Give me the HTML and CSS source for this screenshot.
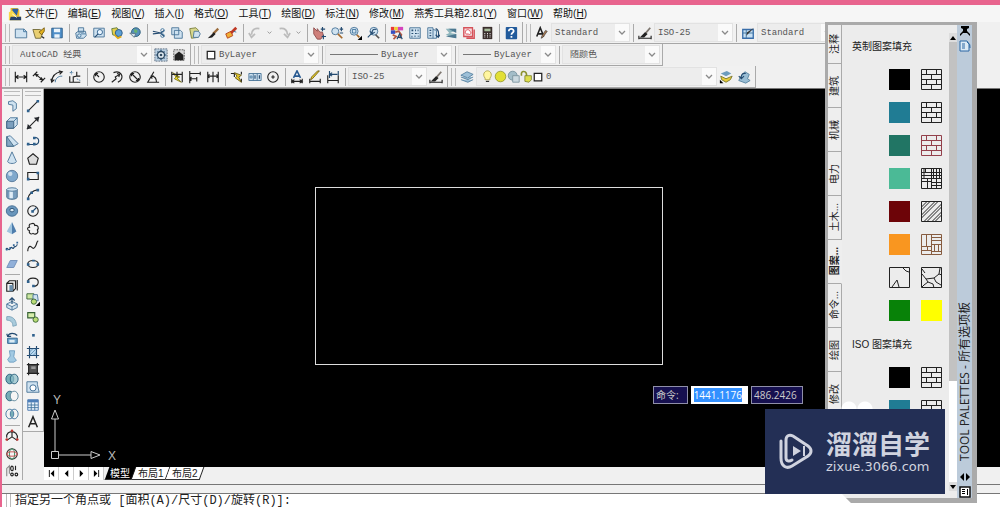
FILE: index.html
```html
<!DOCTYPE html>
<html lang="zh-CN">
<head>
<meta charset="utf-8">
<title>AutoCAD</title>
<link rel="stylesheet" href="styles.css">
</head>
<body>
<svg class="sprite" aria-hidden="true">
  <symbol id="chev" viewBox="0 0 8 8"><path class="g" d="M1 2.5l3 3 3-3"/></symbol>
  <symbol id="app" viewBox="0 0 16 16"><path d="M3 1h8l2 3v7H3z" fill="#e9b92d"/><path d="M5 2h7l-2 8H4z" fill="#2c62a5"/><path d="M1 6l4-2 5 6 5 1v4H1z" fill="#f7d64a"/><path d="M3 11h12v4H2z" fill="#263f68"/><path d="M5 8l5 4" stroke="#fff"/></symbol>
  <symbol id="new" viewBox="0 0 16 16"><path class="s" d="M1.5 3.5h10l3 3v7h-13z"/><path class="b" d="M11 3.5v3h3.5"/></symbol>
  <symbol id="open" viewBox="0 0 16 16"><path d="M1 4h8l4 2-3 8H4z" fill="#e9cf72" stroke="#6d6535"/><path d="M8 7l6-5v4l-3 4z" fill="#e3b21f" stroke="#775c14"/><path class="k" d="M11 12l3 2"/></symbol>
  <symbol id="save" viewBox="0 0 16 16"><path d="M2 2.5h12v11H2z" fill="#4f8fc9" stroke="#275987"/><path d="M4.500 3h7v4h-7zM5 9.500h6v4H5z" fill="#eaf4fb"/></symbol>
  <symbol id="print" viewBox="0 0 16 16"><path class="s" d="M5 2h6v5H5zM2 8l3-2h8l1 5-3 3H3z"/><circle class="b" cx="6" cy="11" r="2"/><path class="b" d="M8 9h5"/></symbol>
  <symbol id="preview" viewBox="0 0 16 16"><path class="s" d="M2 2.500h12v10H2z"/><circle cx="9" cy="7" r="3" fill="#e9f5ff" stroke="#2a5b89"/><path class="n" d="M7 9l-4 4"/></symbol>
  <symbol id="publish" viewBox="0 0 16 16"><path d="M2 3l6-1 3 4-2 6-6-2z" fill="#e6cf4a" stroke="#5c7838"/><circle cx="10" cy="8" r="4" fill="#5c9fd4" stroke="#27567f"/><path d="M5 10l4 4 4-2" fill="none" stroke="#dfa916" stroke-width="2"/></symbol>
  <symbol id="globe" viewBox="0 0 16 16"><circle cx="9" cy="7" r="5" fill="#568fba" stroke="#285b77"/><path d="M7 3l4 2-1 3-3-1z" fill="#69b26e"/><path d="M2 8l5 5 2-4z" fill="#d8e5ed" stroke="#587283"/></symbol>
  <symbol id="cut" viewBox="0 0 16 16"><path class="n" d="M1 6l9 2 4-3M1 9l9-1 4 4"/><circle class="b" cx="12" cy="5" r="2"/><circle class="b" cx="12" cy="11" r="2"/></symbol>
  <symbol id="copy" viewBox="0 0 16 16"><path class="s" d="M2 2h8v8H2zM5 5h7l2 2v7H5z"/></symbol>
  <symbol id="paste" viewBox="0 0 16 16"><path d="M2 3l7-1 3 3-1 8-7 1z" fill="#d7d78c" stroke="#777b38"/><path class="s" d="M7 6l5 0 2 3-2 4H6z"/></symbol>
  <symbol id="brush" viewBox="0 0 16 16"><path d="M14 3L8 9" stroke="#9a6a3a" stroke-width="2.500"/><path d="M9 7l2 2-4 4-5 1z" fill="#222"/></symbol>
  <symbol id="block" viewBox="0 0 16 16"><path d="M2 9l6-3 2 5-6 3z" fill="#f0ae35" stroke="#b53c16"/><path d="M14 2L8 8" stroke="#bf3723" stroke-width="3"/><path class="b" d="M11 6l3 1"/></symbol>
  <symbol id="undo" viewBox="0 0 16 16"><path d="M13 3C7 2 4 5 4 10M1 8l3 5 4-4" fill="none" stroke="#bbb" stroke-width="2"/></symbol>
  <symbol id="redo" viewBox="0 0 16 16"><path d="M3 3c6-1 9 2 9 7M15 8l-3 5-4-4" fill="none" stroke="#bbb" stroke-width="2"/></symbol>
  <symbol id="pan" viewBox="0 0 16 16"><path d="M2 2l4 4V3l3 4 3 0 1 4-3 4H6L2 9z" fill="#cf807b" stroke="#8d4a4a"/><path class="n" d="M12 1v5M10 3.500h5M13 10v5M11 12h5"/></symbol>
  <symbol id="zoomr" viewBox="0 0 16 16"><circle class="s" cx="6" cy="6" r="4"/><path d="M9 9l5 5" stroke="#a66b2d" stroke-width="2"/><path class="n" d="M13 1v5M11 3.500h4M11 8h4"/></symbol>
  <symbol id="zoomw" viewBox="0 0 16 16"><circle class="s" cx="7" cy="6" r="4.500"/><path class="b" d="M5 4h4v4H5z"/><path d="M10 10l3 3" stroke="#a66b2d" stroke-width="2"/><path d="M16 11v5h-5z"/></symbol>
  <symbol id="zoomp" viewBox="0 0 16 16"><circle class="s" cx="9" cy="6" r="4.500"/><path class="n" d="M6 9l-4 4M12 4c-4-1-5 1-5 4M5 6l2 3 3-2" stroke-width="2"/><path d="M11 10l4 4" stroke="#555" stroke-width="2"/></symbol>
  <symbol id="props" viewBox="0 0 16 16"><path d="M1 1h4v4H1z" fill="#e8383a"/><path d="M5 1h4v4H5z" fill="#efd02e"/><path d="M9 1h6v4H9z" fill="#d444bd"/><path d="M1 5h5v4H1z" fill="#354fc1"/><path d="M6 7l4-1 3 4-2 4M3 10l4 2-3 3" fill="none" stroke="#b25743" stroke-width="2"/><path class="n" d="M8 15l3-6 3 6M9 13h4"/></symbol>
  <symbol id="dc" viewBox="0 0 16 16"><path class="s" d="M2 2h12v12H2z"/><path d="M4 4h2v2H4zM8 4h1v2H8zM11 4h1v2h-1zM4 8h2v1H4zM8 8h2v1H8zM11 8h1v1h-1zM4 11h1v2H4zM7 11h2v1H7zM11 11h2v1h-2z" fill="#244c70"/></symbol>
  <symbol id="tp" viewBox="0 0 16 16"><path class="s" d="M2 2h6v12H2zM8 4l4 1v9H8"/><path class="n" d="M4 5h2M4 8h2M4 11h2M11 3c3 1 4 4 3 9M11 10l3 3 2-3"/></symbol>
  <symbol id="sheet" viewBox="0 0 16 16"><path d="M2 3h11v2L7 8l7 1v5l-8-2-4-2 4-2z" fill="#8fb6bd"/><path d="M5 3h9v5zM2 12l12-3v5z" fill="#4d7891"/></symbol>
  <symbol id="markup" viewBox="0 0 16 16"><path d="M2 2h10v10H2zM5 14h9V4" fill="#f7d9dc" stroke="#d55259" stroke-width="1.500"/><path d="M4 7c0-4 5-3 5-1 3 2 0 5-2 3-2 1-4-1-3-2" fill="#fff" stroke="#db4049"/></symbol>
  <symbol id="calc" viewBox="0 0 16 16"><path d="M3 1h11v14H3z" fill="#3a2e2c"/><path d="M5 3h7v3H5z" fill="#a8bd9b"/><path d="M5 8h1v1H5zM8 8h1v1H8zM11 8h1v1h-1zM5 10h1v1H5zM8 10h1v1H8zM11 10h1v1h-1zM5 12h1v1H5zM8 12h1v1H8zM11 12h1v1h-1z" fill="#fff"/></symbol>
  <symbol id="help" viewBox="0 0 16 16"><rect x="2" y="1" width="13" height="14" rx="1" fill="#225b9c"/><path d="M5.500 6c0-4 6-3 5.500 0-.3 2-2.500 1.500-2.500 4M8.500 11.500v2" fill="none" stroke="#fff" stroke-width="2"/></symbol>
  <symbol id="tstyle" viewBox="0 0 16 16"><path d="M2 12L6 2l4 10M3.500 9h5" fill="none" stroke="#222" stroke-width="1.800"/><path d="M14 6l-5 7-2 1 1-3 4-6z" fill="#a77a52" stroke="#333" stroke-width=".7"/></symbol>
  <symbol id="dstyle" viewBox="0 0 16 16"><path class="k" d="M1 14h14M1 11v4M15 11v4"/><path d="M14 2L8 9" stroke="#7d766f" stroke-width="2"/><path d="M8 7l3 2-4 4H2z" fill="#222"/></symbol>
  <symbol id="tbl" viewBox="0 0 16 16"><path d="M2 4h12v10H2z" fill="#c7e0f3" stroke="#386daa" stroke-width="1.500"/><path class="b" d="M2 8h12M6 4v10"/><path d="M15 2l-5 5-4 4 1-4z" fill="#353535"/></symbol>
  <symbol id="gear" viewBox="0 0 16 16"><path d="M1 1h14v14H1z" fill="#b9cee0" stroke="#5a6c7d" stroke-dasharray="2 1"/><circle cx="8" cy="8" r="4" fill="#e4eef5" stroke="#304a60" stroke-width="1.500"/><circle cx="8" cy="8" r="1.500" fill="#304a60"/><path class="n" d="M8 2v2M8 12v2M2 8h2M12 8h2M4 4l1 1M11 11l1 1M12 4l-1 1M5 11l-1 1"/></symbol>
  <symbol id="home" viewBox="0 0 16 16"><path d="M2 2h12v12H2z" fill="#d7d7d7" stroke="#555" stroke-dasharray="2 1"/><path d="M3 8l5-4 5 4v6H3z" fill="#202020"/></symbol>
  <symbol id="dlin" viewBox="0 0 16 16"><path class="k" d="M1.500 2v12M14.500 2v12M2 8h12M5 6L2 8l3 2M11 6l3 2-3 2"/></symbol>
  <symbol id="dali" viewBox="0 0 16 16"><path class="k" d="M1 7l5-5M10 14l5-5M4 5l8 6"/><path d="M3 4l5 1-3 3zM13 12l-5-1 3-3z" fill="#222"/></symbol>
  <symbol id="darc" viewBox="0 0 16 16"><path class="k" d="M2 14C2 6 6 3 13 2M1 10l1 4 3-3M10 1l4 1-3 3"/><path class="b" d="M6 14c0-4 3-7 8-7"/></symbol>
  <symbol id="dord" viewBox="0 0 16 16"><path class="k" d="M2 7v7h12M6 14V8l4-1V2M10 7h4"/><path class="b" d="M2 3h4M4 1v4M10 10l4 2" stroke-dasharray="2 1"/></symbol>
  <symbol id="drad" viewBox="0 0 16 16"><circle class="k" cx="8" cy="8" r="6"/><path class="k" d="M8 8L4 4M4 7V4h3"/></symbol>
  <symbol id="djog" viewBox="0 0 16 16"><path class="k" d="M4 3c8-3 12 4 8 9l-3 2M2 14l5-4-1-2 5-3M8 4l3 1-1 3"/></symbol>
  <symbol id="ddia" viewBox="0 0 16 16"><circle class="k" cx="8" cy="8" r="6"/><path class="k" d="M4 4l8 8M4 7V4h3M12 9v3H9"/></symbol>
  <symbol id="dang" viewBox="0 0 16 16"><path class="k" d="M15 14H2L9 2M6 7c4 0 6 3 6 7M9 7H6l1 3"/></symbol>
  <symbol id="dquick" viewBox="0 0 16 16"><path d="M3 3l8 5-3 1 5 5-8-4 2-2z" fill="#f1df22" stroke="#77721b"/><path class="k" d="M2 2v12M14 2v12M2 5h12M8 2v6"/></symbol>
  <symbol id="dbase" viewBox="0 0 16 16"><path class="k" d="M2 1v14M2 4h12M14 2v4M2 10h8M10 8v5M4 8l-2 2 2 2"/></symbol>
  <symbol id="dcont" viewBox="0 0 16 16"><path class="k" d="M2 2v12M8 2v12M14 2v12M2 7h12M4 5L2 7l2 2M12 5l2 2-2 2"/></symbol>
  <symbol id="dspace" viewBox="0 0 16 16"><path class="k" d="M1 4h4v4M13 2v3M13 10v4"/><path d="M5 3l8 3-3 2 3 6-7-5 2-2z" fill="#e3c528" stroke="#665c1b"/></symbol>
  <symbol id="dtol" viewBox="0 0 16 16"><path class="s" d="M1 4h14v8H1zM6 4v8M10.500 4v8"/><circle class="b" cx="3.500" cy="8" r="1.300"/><path class="n" d="M8 6v4M13 6v4"/></symbol>
  <symbol id="dcen" viewBox="0 0 16 16"><circle class="k" cx="8" cy="8" r="6"/><path class="k" d="M8 6v4M6 8h4"/></symbol>
  <symbol id="dedit" viewBox="0 0 16 16"><path d="M4 9l4-8 4 8M5 7h6" fill="none" stroke="#285a91" stroke-width="1.800"/><path class="k" d="M2 10v5M14 10v5M2 13h12M5 11l-3 2 3 2M11 11l3 2-3 2"/></symbol>
  <symbol id="dtedit" viewBox="0 0 16 16"><path class="k" d="M2 10v5M14 10v5M2 13h12"/><path d="M13 1L5 10l-2 1 1-3 7-7z" fill="#ead127" stroke="#6d5a17"/></symbol>
  <symbol id="dupd" viewBox="0 0 16 16"><path class="k" d="M2 6v9M14 6v9M2 12h12"/><path class="n" d="M4 1v8M14 1v5M4 5h9M7 3L4 5l3 2"/></symbol>
  <symbol id="layers" viewBox="0 0 16 16"><path d="M1 6l7-4 7 3-6 4zM1 8l8 3 6-3M1 11l8 3 6-3" fill="#9dc0d8" stroke="#55809f"/></symbol>
  <symbol id="bulb" viewBox="0 0 16 16"><path d="M5 10C1 5 5 1 8 1s7 4 3 9v2H5z" fill="#fff6a0" stroke="#a99f45"/><path class="k" d="M6 14h4"/></symbol>
  <symbol id="sun" viewBox="0 0 16 16"><circle cx="8" cy="8" r="6.500" fill="#e2df35" stroke="#91962b"/></symbol>
  <symbol id="freeze" viewBox="0 0 16 16"><circle cx="7" cy="7" r="5.500" fill="#a3bdc8" stroke="#708b98"/><path d="M7 7h8v8H7z" fill="#cbd9df" stroke="#75909a"/></symbol>
  <symbol id="lock" viewBox="0 0 16 16"><path d="M2 7c-2-6 5-7 6-2v3" fill="none" stroke="#8c912f" stroke-width="2"/><path d="M6 7h8v5l-3 3-5-1z" fill="#dede4b" stroke="#7d812e"/></symbol>
  <symbol id="box" viewBox="0 0 16 16"><path d="M2 2h12v12H2z" fill="#fff" stroke="#222" stroke-width="2"/></symbol>
  <symbol id="lcur" viewBox="0 0 16 16"><path d="M2 4l7-3 5 3-6 3z" fill="#6c9cbd"/><path d="M2 7l6 3 7-3-2 4-5 3-5-3z" fill="#e5cb36" stroke="#79762d"/><path d="M1 15h4l-4-4z"/></symbol>
  <symbol id="lprev" viewBox="0 0 16 16"><path d="M4 8l5-6 5 3-2 5 3 2-5 3-8-3z" fill="#99bdd4" stroke="#52809d"/><path class="n" d="M10 4C6 3 4 6 5 10M2 7l3 3 3-3" stroke-width="2"/></symbol>
  <symbol id="poly" viewBox="0 0 16 16"><path class="s" d="M4 3l5-1 4 3v6l-4 3V7L4 6z"/></symbol>
  <symbol id="cube" viewBox="0 0 16 16"><path class="s" d="M2 6l4-4h8v8l-4 4H2z"/><path d="M2 6h8v8H2z" fill="#7b9fbe" stroke="#385d7d"/><path class="b" d="M10 6l4-4"/></symbol>
  <symbol id="wedge" viewBox="0 0 16 16"><path class="s" d="M2 3l4-1 9 9-5 3H2z"/><path d="M2 3v11h8z" fill="#86a8c4" stroke="#426986"/></symbol>
  <symbol id="cone" viewBox="0 0 16 16"><path class="s" d="M8 1l5 11c-1 3-9 3-10 0z"/></symbol>
  <symbol id="sphere" viewBox="0 0 16 16"><circle cx="8" cy="8" r="6.500" fill="#80a8cc" stroke="#537698"/><circle cx="6" cy="5.500" r="2.500" fill="#cfe0ef"/></symbol>
  <symbol id="cyl" viewBox="0 0 16 16"><path d="M2 4v9c2 3 10 3 12 0V4z" fill="#789dbd" stroke="#456a89"/><path d="M5 5v9h4V5z" fill="#dfecf6"/><ellipse class="s" cx="8" cy="4" rx="6" ry="2"/></symbol>
  <symbol id="torus" viewBox="0 0 16 16"><ellipse cx="8" cy="8" rx="6.500" ry="6" fill="#6996bc" stroke="#416c91"/><ellipse cx="8" cy="7" rx="2.500" ry="2" fill="#dcebf5" stroke="#264e73"/></symbol>
  <symbol id="pyr" viewBox="0 0 16 16"><path d="M8 1L2 12l6 3z" fill="#9fc4df"/><path d="M8 1l5 11-5 3z" fill="#4e7dad"/></symbol>
  <symbol id="helix" viewBox="0 0 16 16"><path class="n" d="M1 12c2-4 3 3 5-1s3 2 4-1 3 1 4-4" stroke-width="1"/><path d="M1 11h2v2H1zM5 9h2v2H5zM9 6h2v2H9zM13 3h2v2h-2z" fill="#326699"/></symbol>
  <symbol id="plane" viewBox="0 0 16 16"><path d="M6 4h8l-4 8H2z" fill="#91b0d9" stroke="#6b8cb6"/></symbol>
  <symbol id="extr" viewBox="0 0 16 16"><path class="k" d="M2 5h7v9H2zM2 5l3-3h7v9l-3 3M14 1v12"/><path d="M5 7h4v7H5z" fill="#698eac"/></symbol>
  <symbol id="press" viewBox="0 0 16 16"><path class="s" d="M2 8l6-3 6 3v4l-6 3-6-3zM2 8l6 3 6-3M8 11v4"/><path class="n" d="M8 1v7M5 4l3-3 3 3"/></symbol>
  <symbol id="sweep" viewBox="0 0 16 16"><path d="M2 3c7-1 11 4 11 10l-4 1c0-5-3-7-7-7z" fill="#a9cbdc" stroke="#7ba2b8"/></symbol>
  <symbol id="revol" viewBox="0 0 16 16"><path d="M3 7h11v6H3z" fill="#70a6ce" stroke="#29608b"/><path class="n" d="M3 5c2-5 8-4 11-1M2 2l1 3 4 0"/><path d="M5 9h6v3H5z" fill="#dcecf4"/></symbol>
  <symbol id="loft" viewBox="0 0 16 16"><path d="M5 2h6L10 9l3 4-3 2H5l-2-3 3-4z" fill="#a2cae3" stroke="#6b9dc0"/></symbol>
  <symbol id="union" viewBox="0 0 16 16"><ellipse cx="5.500" cy="8" rx="4.500" ry="5.500" fill="#76aeb7" stroke="#255c79"/><ellipse cx="10.500" cy="8" rx="4.500" ry="5.500" fill="#8dbdc8" fill-opacity=".7" stroke="#255c79"/></symbol>
  <symbol id="subt" viewBox="0 0 16 16"><ellipse cx="5.500" cy="8" rx="4.500" ry="5.500" fill="#76aeb7" stroke="#255c79"/><ellipse cx="10.500" cy="8" rx="4.500" ry="5.500" fill="#f5f5f5" stroke="#568197"/></symbol>
  <symbol id="inter" viewBox="0 0 16 16"><path d="M8 4q4 4 0 8-4-4 0-8" fill="#76aeb7"/><ellipse class="b" cx="5.500" cy="8" rx="4.500" ry="5.500"/><ellipse class="b" cx="10.500" cy="8" rx="4.500" ry="5.500"/></symbol>
  <symbol id="m3d" viewBox="0 0 16 16"><path class="k" d="M8 9V2M8 9l-6 4M8 9l6 4M2 10C1 5 5 3 8 3s7 3 6 8"/><circle cx="8" cy="2" r="1.500" fill="#bf3430"/><circle cx="2" cy="12" r="1.500" fill="#bf3430"/><circle cx="14" cy="12" r="1.500" fill="#bf3430"/></symbol>
  <symbol id="r3d" viewBox="0 0 16 16"><circle cx="8" cy="8" r="6" fill="none" stroke="#333" stroke-width="1.300"/><ellipse cx="8" cy="8" rx="3" ry="6" fill="none" stroke="#298253"/><ellipse cx="8" cy="8" rx="6" ry="2.500" fill="none" stroke="#c44"/></symbol>
  <symbol id="a3d" viewBox="0 0 16 16"><path class="g" d="M2 14V5l3-3v9"/><ellipse class="k" cx="8" cy="5" rx="1.500" ry="2.500"/><path class="k" d="M12 2v5"/><circle class="k" cx="8" cy="12" r="1.500"/><circle class="k" cx="13" cy="12" r="1.500"/></symbol>
  <symbol id="line" viewBox="0 0 16 16"><path class="k" d="M3 13L13 3"/><path d="M1 12h3v3H1zM12 1h3v3h-3z" fill="#2f618d"/></symbol>
  <symbol id="xline" viewBox="0 0 16 16"><path class="k" d="M1 15L15 1"/><path d="M1 15l1-6 5 5zM15 1l-1 6-5-5z" fill="#25282d"/></symbol>
  <symbol id="pline" viewBox="0 0 16 16"><path class="n" d="M1 12h12M10 4c6 0 6 8 0 8M10 4h2" stroke-width="1.800"/><path d="M1 10h3v3H1zM8 10h3v3H8zM8 3h3v3H8z" fill="#2f618d"/></symbol>
  <symbol id="pent" viewBox="0 0 16 16"><path d="M8 2l6 5-2 7H4L2 7z" fill="#ddd" stroke="#222" stroke-width="1.300"/></symbol>
  <symbol id="rect" viewBox="0 0 16 16"><path class="k" d="M2 4h12v8H2z"/><path d="M1 10h3v3H1zM12 3h3v3h-3z" fill="#2f618d"/></symbol>
  <symbol id="arc" viewBox="0 0 16 16"><path class="k" d="M2 14C3 8 7 4 14 3"/><path d="M1 12h3v3H1zM5 5h3v3H5zM12 2h3v3h-3z" fill="#2f618d"/></symbol>
  <symbol id="circ" viewBox="0 0 16 16"><circle class="k" cx="8" cy="8" r="6"/><path class="n" d="M8 8l4-4"/><path d="M6 7h3v3H6z" fill="#2f618d"/></symbol>
  <symbol id="cloud" viewBox="0 0 16 16"><path class="k" d="M6 2c3-1 4 0 4 2 4-1 5 3 3 5 2 4-2 6-5 4-3 2-5-1-4-3-3-1-3-4 0-4-1-2 0-4 2-4z"/></symbol>
  <symbol id="spl" viewBox="0 0 16 16"><path class="k" d="M2 14c0-4 2-7 4-5s3 3 5-1 1-5 3-6"/></symbol>
  <symbol id="ell" viewBox="0 0 16 16"><ellipse class="k" cx="8" cy="8" rx="6" ry="4"/><path d="M1 7h3v3H1zM12 7h3v3h-3zM7 3h3v2H7z" fill="#2f618d"/></symbol>
  <symbol id="earc" viewBox="0 0 16 16"><path class="k" d="M2 8c0-6 12-6 12 0 0 4-3 5-6 5"/><path d="M1 6h3v3H1zM7 11h3v3H7z" fill="#2f618d"/></symbol>
  <symbol id="ins" viewBox="0 0 16 16"><path d="M1 2h8v6H1z" fill="#cce7a2" stroke="#356033"/><path class="s" d="M8 3h5l1 7H8z"/><circle cx="9" cy="11" r="3" fill="#bbdd76" stroke="#356033"/><path d="M16 11v5h-5z"/></symbol>
  <symbol id="mkb" viewBox="0 0 16 16"><path d="M2 3h8v6H2z" fill="#d6edaa" stroke="#356033" stroke-width="1.300"/><circle cx="11" cy="11" r="3" fill="#b9dc74" stroke="#356033"/></symbol>
  <symbol id="pt" viewBox="0 0 16 16"><path d="M7 8h3v3H7z" fill="#2f618d"/></symbol>
  <symbol id="hatch" viewBox="0 0 16 16"><path d="M4 4h8v8H4z" fill="#b9d8ee"/><path class="n" d="M4 1v14M12 1v14M1 4h14M1 12h14"/><path class="b" d="M4 8l4-4M4 12l8-8M8 12l4-4" stroke-width=".7"/></symbol>
  <symbol id="grad" viewBox="0 0 16 16"><path d="M3 3h10v10H3z" fill="#555"/><path class="k" d="M3 1v14M13 1v14M1 3h14M1 13h14" stroke-width="1.800"/><path d="M6 5h5v3H6z" fill="#999"/></symbol>
  <symbol id="region" viewBox="0 0 16 16"><path class="s" d="M1 2h12v3l2 9H1z"/><circle cx="8" cy="9" r="3.500" fill="#fff" stroke="#2f618d"/></symbol>
  <symbol id="table" viewBox="0 0 16 16"><path d="M2 2h12v12H2z" fill="#e9f2fb" stroke="#4272ad"/><path d="M2 2h12v3H2z" fill="#4d7fb9"/><path class="b" d="M2 8h12M2 11h12M6 5v9M10 5v9"/></symbol>
  <symbol id="mtext" viewBox="0 0 16 16"><path d="M3 14L8 2l5 12M5 10h6" fill="none" stroke="#222" stroke-width="1.700"/></symbol>
  <symbol id="first" viewBox="0 0 8 8"><path d="M1 0h1v8H1zM7 0v8L3 4z"/></symbol>
  <symbol id="prev" viewBox="0 0 8 8"><path d="M6 0v8L2 4z"/></symbol>
  <symbol id="next" viewBox="0 0 8 8"><path d="M2 0v8l4-4z"/></symbol>
  <symbol id="last" viewBox="0 0 8 8"><path d="M6 0h1v8H6zM1 0v8l4-4z"/></symbol>
  <symbol id="brick" viewBox="0 0 21 21"><path d="M.5.500h20v20H.5zM.5 5.500h20M.5 10.500h20M.5 15.500h20M5.500.500v5M15.500.500v5M10.500 5.500v5M5.500 10.500v5M15.500 10.500v5M10.500 15.500v5" fill="none" stroke="currentColor"/></symbol>
  <symbol id="plaid" viewBox="0 0 21 21"><path d="M.5.500h20v20H.5zM.5 4.500h20M.5 7.500h20M.5 10.500h20M10.500.500v20M12.500.500v10M15.500.500v10M18.500.500v10M4.500 1v4M6.500 10v10M.5 13.500h10M10.500 14.500h10M10.500 17.500h10M15.500 10v10M3 1v9" fill="none" stroke="currentColor"/></symbol>
  <symbol id="diag" viewBox="0 0 21 21"><path d="M.5.500h20v20H.5zM.5 6L6 .5M.5 9L9 .5M.5 14L14 .5M.5 17L17 .5M3 20.500L20.500 3M6 20.500L20.500 6M11 20.500l9.500-9.500M14 20.500l6.500-6.500" fill="none" stroke="currentColor"/></symbol>
  <symbol id="parq" viewBox="0 0 21 21"><path d="M.5.500h20v20H.5zM5.500.500v12M10.500.500v20M10.500 3.500h10M10.500 6.500h10M.5 12.500h10M.5 16.500h10M10.500 10.500h10M13.500 10.500v7M17.500 10.500v7M10.500 17.500h10M6.500 13v4" fill="none" stroke="currentColor"/></symbol>
  <symbol id="crack" viewBox="0 0 21 21"><path d="M.5.500h20v20H.5zM3 20l5-7 2 7M14 1l3 3 3 1" fill="none" stroke="currentColor"/></symbol>
  <symbol id="stone" viewBox="0 0 21 21"><path d="M.5.500h20v20H.5zM1 7l4 5 8-1 5-4 3 1M5 12l2 3-4 3-2 2M7 15l5 2 1 4M13 11l2 4 5 3M18 7l1-6M1 2l3 4" fill="none" stroke="currentColor"/></symbol>
</svg>

<div class="app">
  <div class="titlebar"></div>
  <nav class="menubar">
    <svg class="logo"><use href="#app"/></svg>
    <button>文件(<u>F</u>)</button><button>编辑(<u>E</u>)</button><button>视图(<u>V</u>)</button><button>插入(<u>I</u>)</button><button>格式(<u>O</u>)</button><button>工具(<u>T</u>)</button><button>绘图(<u>D</u>)</button><button>标注(<u>N</u>)</button><button>修改(<u>M</u>)</button><button>燕秀工具箱2.81(<u>Y</u>)</button><button>窗口(<u>W</u>)</button><button>帮助(<u>H</u>)</button>
  </nav>

  <div class="row">
    <div class="bar">
      <i class="grip"></i>
      <button aria-label="新建"><svg><use href="#new"/></svg></button>
      <button aria-label="打开"><svg><use href="#open"/></svg></button>
      <button aria-label="保存"><svg><use href="#save"/></svg></button>
      <i class="sep"></i>
      <button aria-label="打印"><svg><use href="#print"/></svg></button>
      <button aria-label="打印预览"><svg><use href="#preview"/></svg></button>
      <button aria-label="发布"><svg><use href="#publish"/></svg></button>
      <button aria-label="三维DWF"><svg><use href="#globe"/></svg></button>
      <i class="sep"></i>
      <button aria-label="剪切"><svg><use href="#cut"/></svg></button>
      <button aria-label="复制"><svg><use href="#copy"/></svg></button>
      <button aria-label="粘贴"><svg><use href="#paste"/></svg></button>
      <button aria-label="特性匹配"><svg><use href="#brush"/></svg></button>
      <button aria-label="块编辑器"><svg><use href="#block"/></svg></button>
      <i class="sep"></i>
      <button aria-label="放弃"><svg><use href="#undo"/></svg></button>
      <button class="drop" aria-label="放弃列表"><svg><use href="#chev"/></svg></button>
      <button aria-label="重做"><svg><use href="#redo"/></svg></button>
      <button class="drop" aria-label="重做列表"><svg><use href="#chev"/></svg></button>
      <i class="sep"></i>
      <button aria-label="平移"><svg><use href="#pan"/></svg></button>
      <button aria-label="实时缩放"><svg><use href="#zoomr"/></svg></button>
      <button aria-label="窗口缩放"><svg><use href="#zoomw"/></svg></button>
      <button aria-label="缩放上一个"><svg><use href="#zoomp"/></svg></button>
      <i class="sep"></i>
      <button aria-label="特性"><svg><use href="#props"/></svg></button>
      <button aria-label="设计中心"><svg><use href="#dc"/></svg></button>
      <button aria-label="工具选项板"><svg><use href="#tp"/></svg></button>
      <button aria-label="图纸集"><svg><use href="#sheet"/></svg></button>
      <button aria-label="标记集"><svg><use href="#markup"/></svg></button>
      <button aria-label="计算器"><svg><use href="#calc"/></svg></button>
      <i class="sep"></i>
      <button aria-label="帮助"><svg><use href="#help"/></svg></button>
    </div>
    <div class="bar">
      <i class="grip"></i>
      <button aria-label="文字样式"><svg><use href="#tstyle"/></svg></button>
      <label class="combo w80"><select aria-label="文字样式控制"><option>Standard</option></select><svg><use href="#chev"/></svg></label>
      <i class="sep"></i>
      <button aria-label="标注样式"><svg><use href="#dstyle"/></svg></button>
      <label class="combo w80"><select aria-label="标注样式控制"><option>ISO-25</option></select><svg><use href="#chev"/></svg></label>
      <i class="sep"></i>
      <button aria-label="表格样式"><svg><use href="#tbl"/></svg></button>
      <label class="combo w80"><select aria-label="表格样式控制"><option>Standard</option></select><svg><use href="#chev"/></svg></label>
    </div>
  </div>

  <div class="row">
    <div class="bar">
      <i class="grip"></i>
      <label class="combo w140"><select aria-label="工作空间"><option>AutoCAD 经典</option></select><svg><use href="#chev"/></svg></label>
      <button aria-label="工作空间设置"><svg><use href="#gear"/></svg></button>
      <button aria-label="我的工作空间"><svg><use href="#home"/></svg></button>
    </div>
    <div class="bar">
      <i class="grip"></i>
      <label class="combo w120"><svg class="mini"><use href="#box"/></svg><select aria-label="颜色"><option>ByLayer</option></select><svg><use href="#chev"/></svg></label>
      <i class="sep"></i>
      <label class="combo w126"><i class="rule"></i><select aria-label="线型"><option>ByLayer</option></select><svg><use href="#chev"/></svg></label>
      <i class="sep"></i>
      <label class="combo w100"><i class="rule short"></i><select aria-label="线宽"><option>ByLayer</option></select><svg><use href="#chev"/></svg></label>
      <i class="sep"></i>
      <label class="combo w100"><select aria-label="打印样式"><option>随颜色</option></select><svg><use href="#chev"/></svg></label>
    </div>
  </div>

  <div class="row">
    <div class="bar">
      <i class="grip"></i>
      <button aria-label="线性"><svg><use href="#dlin"/></svg></button>
      <button aria-label="对齐"><svg><use href="#dali"/></svg></button>
      <button aria-label="弧长"><svg><use href="#darc"/></svg></button>
      <button aria-label="坐标"><svg><use href="#dord"/></svg></button>
      <i class="sep"></i>
      <button aria-label="半径"><svg><use href="#drad"/></svg></button>
      <button aria-label="折弯"><svg><use href="#djog"/></svg></button>
      <button aria-label="直径"><svg><use href="#ddia"/></svg></button>
      <button aria-label="角度"><svg><use href="#dang"/></svg></button>
      <i class="sep"></i>
      <button aria-label="快速标注"><svg><use href="#dquick"/></svg></button>
      <button aria-label="基线"><svg><use href="#dbase"/></svg></button>
      <button aria-label="连续"><svg><use href="#dcont"/></svg></button>
      <i class="sep"></i>
      <button aria-label="标注间距"><svg><use href="#dspace"/></svg></button>
      <button aria-label="公差"><svg><use href="#dtol"/></svg></button>
      <button aria-label="圆心标记"><svg><use href="#dcen"/></svg></button>
      <i class="sep"></i>
      <button aria-label="编辑标注"><svg><use href="#dedit"/></svg></button>
      <button aria-label="编辑标注文字"><svg><use href="#dtedit"/></svg></button>
      <button aria-label="标注更新"><svg><use href="#dupd"/></svg></button>
      <i class="sep"></i>
      <label class="combo w80"><select aria-label="标注样式"><option>ISO-25</option></select><svg><use href="#chev"/></svg></label>
      <button aria-label="标注样式管理"><svg><use href="#dstyle"/></svg></button>
    </div>
    <div class="bar">
      <i class="grip"></i>
      <button aria-label="图层特性"><svg><use href="#layers"/></svg></button>
      <label class="combo layer"><svg class="mid"><use href="#bulb"/></svg><svg class="mid"><use href="#sun"/></svg><svg class="mid"><use href="#freeze"/></svg><svg class="mid"><use href="#lock"/></svg><svg class="mini"><use href="#box"/></svg><select aria-label="图层"><option>0</option></select><svg><use href="#chev"/></svg></label>
      <button aria-label="置为当前图层"><svg><use href="#lcur"/></svg></button>
      <button aria-label="上一个图层"><svg><use href="#lprev"/></svg></button>
    </div>
  </div>

  <div class="work">
    <div class="side">
      <div class="vbar">
        <i class="vgrip"></i>
        <button aria-label="多段体"><svg><use href="#poly"/></svg></button>
        <button aria-label="长方体"><svg><use href="#cube"/></svg></button>
        <button aria-label="楔体"><svg><use href="#wedge"/></svg></button>
        <button aria-label="圆锥体"><svg><use href="#cone"/></svg></button>
        <button aria-label="球体"><svg><use href="#sphere"/></svg></button>
        <button aria-label="圆柱体"><svg><use href="#cyl"/></svg></button>
        <button aria-label="圆环体"><svg><use href="#torus"/></svg></button>
        <button aria-label="棱锥面"><svg><use href="#pyr"/></svg></button>
        <button aria-label="螺旋"><svg><use href="#helix"/></svg></button>
        <button aria-label="平面曲面"><svg><use href="#plane"/></svg></button>
        <i class="hsep"></i>
        <button aria-label="拉伸"><svg><use href="#extr"/></svg></button>
        <button aria-label="按住并拖动"><svg><use href="#press"/></svg></button>
        <button aria-label="扫掠"><svg><use href="#sweep"/></svg></button>
        <button aria-label="旋转"><svg><use href="#revol"/></svg></button>
        <button aria-label="放样"><svg><use href="#loft"/></svg></button>
        <i class="hsep"></i>
        <button aria-label="并集"><svg><use href="#union"/></svg></button>
        <button aria-label="差集"><svg><use href="#subt"/></svg></button>
        <button aria-label="交集"><svg><use href="#inter"/></svg></button>
        <i class="hsep"></i>
        <button aria-label="三维移动"><svg><use href="#m3d"/></svg></button>
        <button aria-label="三维旋转"><svg><use href="#r3d"/></svg></button>
        <button aria-label="三维对齐"><svg><use href="#a3d"/></svg></button>
      </div>
      <div class="vcol">
        <div class="vbar draw">
          <i class="vgrip"></i>
          <button aria-label="直线"><svg><use href="#line"/></svg></button>
          <button aria-label="构造线"><svg><use href="#xline"/></svg></button>
          <button aria-label="多段线"><svg><use href="#pline"/></svg></button>
          <button aria-label="正多边形"><svg><use href="#pent"/></svg></button>
          <button aria-label="矩形"><svg><use href="#rect"/></svg></button>
          <button aria-label="圆弧"><svg><use href="#arc"/></svg></button>
          <button aria-label="圆"><svg><use href="#circ"/></svg></button>
          <button aria-label="修订云线"><svg><use href="#cloud"/></svg></button>
          <button aria-label="样条曲线"><svg><use href="#spl"/></svg></button>
          <button aria-label="椭圆"><svg><use href="#ell"/></svg></button>
          <button aria-label="椭圆弧"><svg><use href="#earc"/></svg></button>
          <button aria-label="插入块"><svg><use href="#ins"/></svg></button>
          <button aria-label="创建块"><svg><use href="#mkb"/></svg></button>
          <button aria-label="点"><svg><use href="#pt"/></svg></button>
          <button aria-label="图案填充"><svg><use href="#hatch"/></svg></button>
          <button aria-label="渐变色"><svg><use href="#grad"/></svg></button>
          <button aria-label="面域"><svg><use href="#region"/></svg></button>
          <button aria-label="表格"><svg><use href="#table"/></svg></button>
          <button aria-label="多行文字"><svg><use href="#mtext"/></svg></button>
        </div>
      </div>
    </div>
    <main class="view">
      <div class="canvas">
        <div class="shape"></div>
        <div class="prompt">
          <span>命令:</span>
          <div class="field"><mark>1441.1176</mark></div>
          <span>486.2426</span>
        </div>
        <svg class="ucs" viewBox="0 0 70 70">
          <path d="M4.500 58.500h7v7h-7zM8 58V26M12 62h32M4.500 26L8 17l3.500 9zM44 58.500l9 3.500-9 3.500z"/>
          <text x="6" y="11">Y</text><text x="61" y="67">X</text>
        </svg>
      </div>
      <div class="sheets">
        <button aria-label="第一个"><svg><use href="#first"/></svg></button>
        <button aria-label="前一个"><svg><use href="#prev"/></svg></button>
        <button aria-label="后一个"><svg><use href="#next"/></svg></button>
        <button aria-label="最后"><svg><use href="#last"/></svg></button>
        <button class="sheet on"><span>模型</span></button>
        <button class="sheet"><span>布局1</span></button>
        <button class="sheet"><span>布局2</span></button>
      </div>
    </main>
  </div>
  <div class="split"></div>
  <div class="command"><i class="grip"></i><label for="cmd">指定另一个角点或 [面积(A)/尺寸(D)/旋转(R)]:</label><input id="cmd" type="text"></div>
</div>

<aside class="palette">
  <div class="ptabs">
    <button><span>注释</span></button><button><span>建筑</span></button><button><span>机械</span></button><button><span>电力</span></button><button><span>土木...</span></button><button class="on"><span>图案...</span></button><button><span>命令...</span></button><button><span>绘图</span></button><button><span>修改</span></button>
  </div>
  <div class="pbody">
    <h2>英制图案填充</h2>
    <div class="swatches">
      <i class="black"></i><svg><use href="#brick"/></svg>
      <i class="teal"></i><svg><use href="#brick"/></svg>
      <i class="pine"></i><svg class="red"><use href="#brick"/></svg>
      <i class="mint"></i><svg><use href="#plaid"/></svg>
      <i class="maroon"></i><svg><use href="#diag"/></svg>
      <i class="orange"></i><svg class="brown"><use href="#parq"/></svg>
      <svg><use href="#crack"/></svg><svg><use href="#stone"/></svg>
      <i class="green"></i><i class="yellow"></i>
    </div>
    <h2>ISO 图案填充</h2>
    <div class="swatches">
      <i class="black"></i><svg><use href="#brick"/></svg>
      <i class="teal"></i><svg><use href="#brick"/></svg>
    </div>
  </div>
  <div class="scroll">
    <button aria-label="向上"><svg viewBox="0 0 8 8"><path d="M1 6l3-4 3 4z"/></svg></button>
    <i class="thumb"></i>
    <button aria-label="向下"><svg viewBox="0 0 8 8"><path d="M1 2l3 4 3-4z"/></svg></button>
  </div>
  <div class="ptitle">
    <button aria-label="关闭"><svg viewBox="0 0 12 12"><path d="M2 1h8v2L8 4v2l3 3v2L8 8H4l-3 3V9l3-3V4L2 3z"/></svg></button>
    <button aria-label="菜单"><svg viewBox="0 0 12 12"><path d="M1 1h7l2 3v7H1z" fill="#dceaf5" stroke="#2a67a3"/><path d="M3 4h3M3 6h3M3 8h3M8 2q4 2 3 6" fill="none" stroke="#2a67a3"/></svg></button>
    <span>TOOL PALETTES - 所有选项板</span>
    <button aria-label="自动隐藏"><svg viewBox="0 0 12 12"><path d="M5 2v8L1 6zM7 2v8l4-4z"/></svg></button>
    <button aria-label="特性"><svg viewBox="0 0 12 12"><path d="M1 1h10v10H1z" fill="#fff" stroke="#111" stroke-width="1.500"/><path d="M3 3h3v1H3zM3 5h3v1H3zM3 7h3v1H3zM8 3h1v6H8z"/></svg></button>
  </div>
</aside>

<div class="badge">
  <svg viewBox="0 0 36 38"><path d="M3 9v17c0 9 6 11 11 8l16-10c4-3 4-7 0-10L15 4c-4-2-7 0-7 4v18c0 3 3 4 6 2"/><path class="fillp" d="M15 14l8 5-8 5zM25 14h2v10h-2z"/></svg>
  <div><strong>溜溜自学</strong><small>zixue.3066.com</small></div>
</div>
</body>
</html>
```
FILE: styles.css
```css
* { box-sizing: border-box; }
body {
  margin: 0;
  background: #f0f0f0;
  color: #222;
  font-family: "Liberation Sans", "Noto Sans CJK SC", sans-serif;
  font-size: 10px;
  overflow: hidden;
}
button { margin: 0; padding: 0; border: 0; background: none; color: inherit; font: inherit; }
.sprite { position: absolute; width: 0; height: 0; }

.k { fill: none; stroke: #222; stroke-width: 1.300; }
.b { fill: none; stroke: #3c719c; }
.n { fill: none; stroke: #234a70; stroke-width: 1.300; }
.s { fill: #cfe2f0; stroke: #467196; }
.g { fill: none; stroke: #8a8a8a; stroke-width: 1.300; }

.app { display: flex; flex-direction: column; height: 100vh; border-left: 2px solid #e8648e; }
.titlebar { height: 5px; background: #e8648e; flex: none; }
.menubar { display: flex; align-items: center; gap: 10px; height: 17px; flex: none; padding-left: 6px; background: #f6f6f6; }
.menubar .logo { width: 14px; height: 14px; margin-right: -7px; }
.menubar button { line-height: 16px; white-space: nowrap; color: #111; }

.row { display: flex; height: 22px; flex: none; }
.bar { display: flex; align-items: center; padding: 0 2px; border-right: 1px solid #aaa; border-bottom: 1px solid #a6a6a6; background: #f1f1f1; }
.grip { width: 5px; height: 18px; margin: 0 2px 0 1px; border: solid #bbb; border-width: 0 1px; flex: none; }
.sep { width: 6px; height: 18px; background: linear-gradient(#aaa, #aaa) center / 1px 100% no-repeat; flex: none; }
.bar button { display: grid; place-items: center; width: 18px; height: 20px; flex: none; }
.bar button svg { width: 14px; height: 14px; }
.bar .drop { width: 11px; }
.bar .drop svg { width: 5px; height: 5px; }
.combo { display: flex; align-items: center; height: 19px; padding-left: 4px; background: #ededed; border: 1px solid #e2e2e2; flex: none; }
.combo select { flex: 1; min-width: 0; border: 0; padding: 0 0 0 3px; appearance: none; background: transparent; color: #555; font: 9px "Liberation Mono", "Noto Sans CJK SC", monospace; }
.combo > svg { width: 14px; height: 17px; padding: 0 3px; background: #fafafa; flex: none; }
.combo > .mini { width: 10px; height: 10px; padding: 0; background: none; }
.combo > .mid { width: 13px; height: 13px; padding: 0; background: none; }
.w80 { width: 79px; padding-left: 0; }
.w100 { width: 98px; }
.w120 { width: 118px; }
.w126 { width: 127px; }
.w140 { width: 140px; }
.layer { width: 241px; }
.rule { width: 48px; height: 1px; background: #777; }
.rule.short { width: 28px; }

.work { display: flex; flex: 1; min-height: 0; }
.side { display: flex; width: 42px; flex: none; border-top: 1px solid #aaa; }
.vbar { display: flex; flex-direction: column; align-items: center; width: 20px; padding-top: 2px; border-right: 1px solid #aaa; background: #f3f3f3; flex: 1; }
.vbar button { display: grid; place-items: center; flex: 1; min-height: 0; }
.vbar svg { width: 14px; height: 14px; }
.vgrip { width: 16px; height: 5px; margin-bottom: 1px; border: solid #bbb; border-width: 1px 0; }
.hsep { width: 15px; height: 5px; background: linear-gradient(#aaa, #aaa) center / 100% 1px no-repeat; }
.vcol { display: flex; flex-direction: column; width: 21px; padding-bottom: 48px; }
.draw { width: 100%; border-bottom: 1px solid #aaa; }
.view { display: flex; flex-direction: column; flex: 1; min-width: 0; }
.canvas { position: relative; flex: 1; background: #000; border-top: 1px solid #777; }
.shape { position: absolute; left: 271px; top: 98px; width: 348px; height: 178px; border: 1px solid #ddd; }
.prompt { position: absolute; left: 609px; top: 297px; display: flex; gap: 3px; color: #ccc; font: 10px/16px "Open Sans", "Noto Sans CJK SC", sans-serif; }
.prompt span, .field { height: 18px; padding: 0 5px 0 2px; border: 1px solid #8f8fa8; background: #16104f; }
.prompt span:first-child { padding-right: 8px; }
.field { background: #fff; border-color: #fff; }
.prompt mark { display: block; height: 14px; margin-top: 1px; line-height: 14px; background: #3390ff; color: #fff; }
.ucs { position: absolute; left: 3px; bottom: 4px; width: 70px; height: 70px; overflow: visible; fill: none; stroke: #ccc; }
.ucs text { stroke: none; fill: #bbb; font: 12px "Liberation Sans", sans-serif; }

.sheets { display: flex; height: 13px; flex: none; }
.sheets button { display: grid; place-items: center; width: 15px; background: #fff; border-right: 1px solid #ccc; }
.sheets svg { width: 7px; height: 7px; }
.sheets .sheet { width: 34px; border: 0; border-bottom: 1px solid #333; border-right: 1px solid #222; transform: skewX(-20deg); line-height: 11px; }
.sheets .sheet span { transform: skewX(20deg); }
.sheets .on { width: 27px; margin-left: 3px; background: #000; color: #fff; }

.split { height: 14px; flex: none; border-bottom: 1px solid #777; background: linear-gradient(#777, #777) 0 4px / 100% 1px no-repeat #f1f1f1; }
.command { display: flex; align-items: center; height: 13px; flex: none; padding-top: 1px; background: #fff; overflow: hidden; font: 12px/14px "Liberation Mono", "Noto Sans CJK SC", monospace; }
.command .grip { margin: 0 4px; }
.command input { flex: 1; min-width: 0; height: 12px; padding: 0; border: 0; background: none; font: inherit; outline: 0; }

.palette { position: absolute; right: 23px; top: 22px; width: 152px; height: 481px; display: flex; border: 3px solid #aaa; border-right-width: 5px; border-bottom-width: 5px; background: #ececec; clip-path: polygon(0 0, 100% 0, 100% 100%, 26px 100%, 0 455px); }
.ptabs { width: 14px; flex: none; overflow: hidden; background: #eee; }
.ptabs button { display: grid; place-items: center; width: 14px; height: 44px; border: solid #aaa; border-width: 0 1px 1px 0; }
.ptabs button:first-child { height: 39px; }
.ptabs span { writing-mode: vertical-rl; text-orientation: sideways; transform: rotate(180deg); line-height: 13px; }
.ptabs .on { border-right-color: #eee; font-weight: bold; }
.pbody { flex: 1; min-width: 0; padding: 14px 7px 0 10px; overflow: hidden; }
.pbody h2 { margin: 0 0 14px; font-size: 10px; font-weight: normal; line-height: 16px; white-space: nowrap; }
.swatches { display: grid; grid-template-columns: 21px 21px; justify-content: end; gap: 12px 11px; margin-bottom: 16px; }
.swatches > * { display: block; width: 21px; height: 21px; }
.red { color: #93404b; }
.brown { color: #875c40; }
.black { background: #000; }
.teal { background: #207c94; }
.pine { background: #217564; }
.mint { background: #4bba96; }
.maroon { background: #6d0408; }
.orange { background: #f99620; }
.green { background: #088208; }
.yellow { background: #ff0; }
.scroll { display: flex; flex-direction: column; width: 8px; padding: 8px 0 7px; flex: none; }
.scroll button { height: 9px; background: #ddd; flex: none; }
.scroll svg { display: block; width: 8px; height: 8px; }
.thumb { flex: 1; background: linear-gradient(#c2c2c2 77%, #fff 77%); }
.ptitle { display: flex; flex-direction: column; align-items: center; gap: 3px; width: 15px; flex: none; background: #bccbda; }
.ptitle button, .ptitle svg { display: block; width: 12px; height: 12px; }
.ptitle span { margin-top: auto; margin-bottom: 7px; writing-mode: vertical-rl; text-orientation: sideways; transform: rotate(180deg); font: 12px/15px "Open Sans", "Noto Sans CJK SC", sans-serif; white-space: nowrap; }

.badge { position: absolute; right: 55px; bottom: 13px; width: 180px; height: 85px; display: flex; align-items: center; gap: 12px; padding: 0 0 2px 13px; background: #232f55; color: #d0d3df; }
.badge::before { content: ""; position: absolute; left: 76px; bottom: 100%; width: 32px; height: 8px; background: radial-gradient(circle at 8px 8px, #fff 7px, transparent 8px), radial-gradient(circle at 24px 8px, #fff 7px, transparent 8px); }
.badge svg { width: 36px; height: 38px; fill: none; stroke: #d0d3df; stroke-width: 3; stroke-linecap: round; }
.badge .fillp { fill: #d0d3df; stroke: none; }
.badge strong { display: block; font: bold 26px/32px "Noto Sans CJK SC", sans-serif; }
.badge small { display: block; font: 13px/15px "DejaVu Sans", sans-serif; }
```
